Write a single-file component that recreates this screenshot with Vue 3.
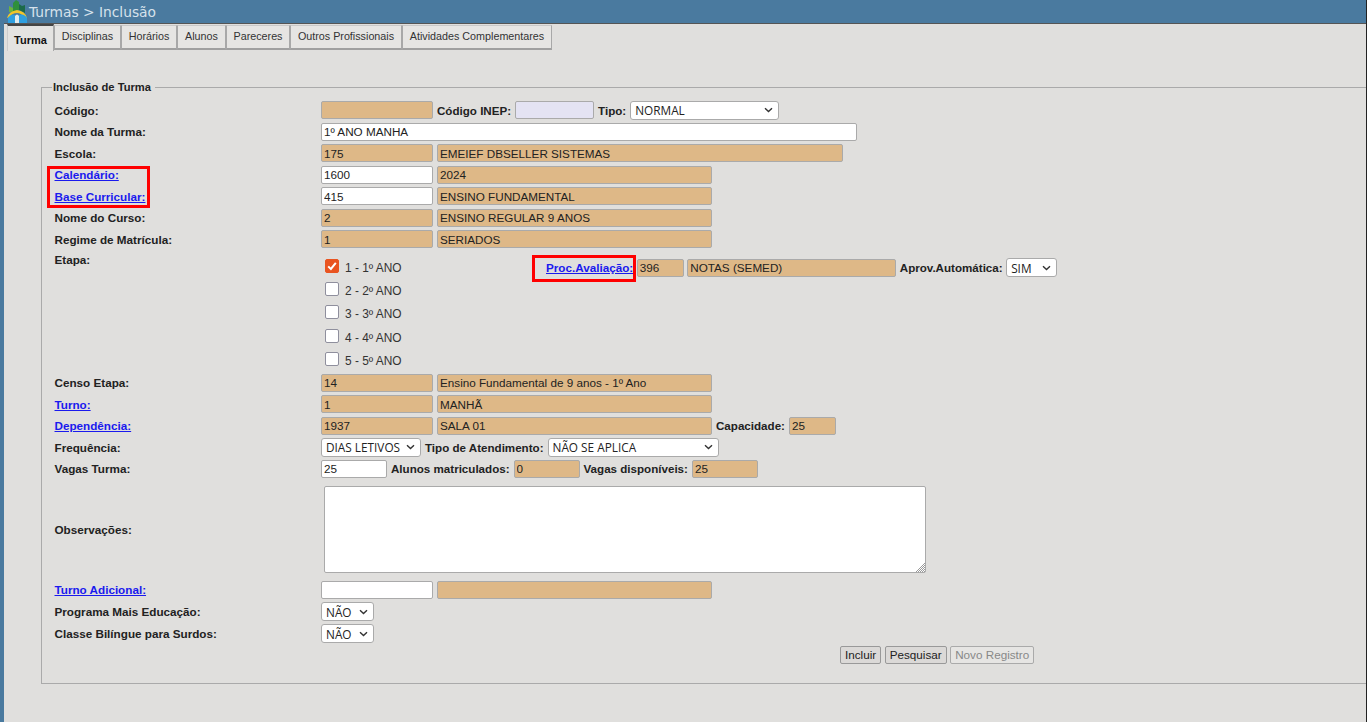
<template>
  <div class="page">
    <!-- barra de titulo -->
    <header class="title-bar">
      <svg class="logo" width="22" height="23" viewBox="0 0 22 23">
        <path d="M3 12 L3 6 L7 8 L7 12 Z" fill="#6cb33f" />
        <path d="M7 12 L7 3 L10 0 L13 2 L13 10 Z" fill="#2f8f3c" />
        <path d="M13 10 L13 4 L16 6 L19 5 L19 13 Z" fill="#1c6a4a" />
        <path d="M1 18 Q3 11 11 10 Q19 11 21 18 L18 17 Q15 13 11 13 Q6 13 4 17 Z" fill="#f2c52a" />
        <path d="M2 23 L2 18 Q5 13 9 15 L9 23 Z" fill="#2f9fe0" />
        <path d="M13 23 L13 15 Q18 13 21 18 L21 23 Z" fill="#2f9fe0" />
        <path d="M9 23 L9 16 Q11 13 13 16 L13 23 Z" fill="#dfe9ee" />
      </svg>
      <span class="title-text">Turmas &gt; Inclusão</span>
    </header>

    <nav class="tabs">
      <a
        v-for="(tab, i) in tabs"
        :key="tab.name"
        class="tab"
        :class="{ active: i === 0 }"
        :style="{ width: tab.width + 'px' }"
      >{{ tab.name }}</a>
    </nav>

    <form class="form-area" @submit.prevent>
      <fieldset class="box">
        <legend>Inclusão de Turma</legend>

        <div class="row">
          <label class="lbl">Código:</label>
          <div class="fields">
            <input class="ro w112" readonly />
            <b>Código INEP:</b>
            <input class="inep" readonly />
            <b>Tipo:</b>
            <select class="w149"><option>NORMAL</option></select>
          </div>
        </div>

        <div class="row">
          <label class="lbl">Nome da Turma:</label>
          <div class="fields"><input class="w536" value="1º ANO MANHA" /></div>
        </div>

        <div class="row">
          <label class="lbl">Escola:</label>
          <div class="fields">
            <input class="ro w112" value="175" readonly />
            <input class="ro w406" value="EMEIEF DBSELLER SISTEMAS" readonly />
          </div>
        </div>

        <div class="row">
          <a class="lbl link">Calendário:</a>
          <div class="fields">
            <input class="w112" value="1600" />
            <input class="ro w275" value="2024" readonly />
          </div>
        </div>

        <div class="row">
          <a class="lbl link">Base Curricular:</a>
          <div class="fields">
            <input class="w112" value="415" />
            <input class="ro w275" value="ENSINO FUNDAMENTAL" readonly />
          </div>
        </div>

        <div class="row">
          <label class="lbl">Nome do Curso:</label>
          <div class="fields">
            <input class="ro w112" value="2" readonly />
            <input class="ro w275" value="ENSINO REGULAR 9 ANOS" readonly />
          </div>
        </div>

        <div class="row">
          <label class="lbl">Regime de Matrícula:</label>
          <div class="fields">
            <input class="ro w112" value="1" readonly />
            <input class="ro w275" value="SERIADOS" readonly />
          </div>
        </div>

        <div class="row etapa-row">
          <label class="lbl etapa-lbl">Etapa:</label>
          <div class="etapa">
            <ul class="checks">
              <li v-for="(et, i) in etapas" :key="et">
                <span class="check" :class="{ on: i === 0 }">
                  <svg v-if="i === 0" width="10" height="10" viewBox="0 0 10 10">
                    <path d="M1.2 5.4 L3.9 8 L8.8 1.9" fill="none" stroke="#fff" stroke-width="2" />
                  </svg>
                </span>
                <span class="check-text">{{ et }}</span>
              </li>
            </ul>
            <div class="fields proc">
              <a class="link">Proc.Avaliação:</a>
              <input class="ro w47" value="396" readonly />
              <input class="ro w209" value="NOTAS (SEMED)" readonly />
              <b>Aprov.Automática:</b>
              <select class="w51"><option>SIM</option></select>
            </div>
          </div>
        </div>

        <div class="row">
          <label class="lbl">Censo Etapa:</label>
          <div class="fields">
            <input class="ro w112" value="14" readonly />
            <input class="ro w275" value="Ensino Fundamental de 9 anos - 1º Ano" readonly />
          </div>
        </div>

        <div class="row">
          <a class="lbl link">Turno:</a>
          <div class="fields">
            <input class="ro w112" value="1" readonly />
            <input class="ro w275" value="MANHÃ" readonly />
          </div>
        </div>

        <div class="row">
          <a class="lbl link">Dependência:</a>
          <div class="fields">
            <input class="ro w112" value="1937" readonly />
            <input class="ro w275" value="SALA 01" readonly />
            <b>Capacidade:</b>
            <input class="ro w47" value="25" readonly />
          </div>
        </div>

        <div class="row">
          <label class="lbl">Frequência:</label>
          <div class="fields">
            <select class="w100"><option>DIAS LETIVOS</option></select>
            <b>Tipo de Atendimento:</b>
            <select class="w171"><option>NÃO SE APLICA</option></select>
          </div>
        </div>

        <div class="row">
          <label class="lbl">Vagas Turma:</label>
          <div class="fields">
            <input class="w66" value="25" />
            <b>Alunos matriculados:</b>
            <input class="ro w66" value="0" readonly />
            <b>Vagas disponíveis:</b>
            <input class="ro w66" value="25" readonly />
          </div>
        </div>

        <div class="row obs-row">
          <label class="lbl">Observações:</label>
          <div class="fields">
            <div class="obs-wrap">
              <textarea class="obs"></textarea>
              <!-- alca de redimensionar -->
              <svg class="grip" width="11" height="11" viewBox="0 0 11 11">
                <path d="M1 10 L10 1 M3 10 L10 3 M5 10 L10 5 M7 10 L10 7 M9 10 L10 9" stroke="#9a9a9a" stroke-width="1" fill="none" />
              </svg>
            </div>
          </div>
        </div>

        <div class="row tall">
          <a class="lbl link">Turno Adicional:</a>
          <div class="fields">
            <input class="w112" />
            <input class="ro w275" readonly />
          </div>
        </div>

        <div class="row tall">
          <label class="lbl">Programa Mais Educação:</label>
          <div class="fields"><select class="w53"><option>NÃO</option></select></div>
        </div>

        <div class="row tall">
          <label class="lbl">Classe Bilíngue para Surdos:</label>
          <div class="fields"><select class="w53"><option>NÃO</option></select></div>
        </div>

        <div class="actions">
          <button>Incluir</button>
          <button>Pesquisar</button>
          <button disabled>Novo Registro</button>
        </div>
      </fieldset>
    </form>

    <!-- marcacoes vermelhas do print -->
    <div class="mark mark-a"></div>
    <div class="mark mark-b"></div>
  </div>
</template>

<script setup>
const tabs = [
  { name: 'Turma', width: 47 },
  { name: 'Disciplinas', width: 67 },
  { name: 'Horários', width: 56 },
  { name: 'Alunos', width: 49 },
  { name: 'Pareceres', width: 64 },
  { name: 'Outros Profissionais', width: 112 },
  { name: 'Atividades Complementares', width: 150 }
]

const etapas = ['1 - 1º ANO', '2 - 2º ANO', '3 - 3º ANO', '4 - 4º ANO', '5 - 5º ANO']
</script>

<style>
html, body { margin: 0; background: #e0dfdd; overflow: hidden; }
</style>

<style scoped>
.page {
  position: relative;
  height: 722px;
  box-sizing: border-box;
  background: #e0dfdd;
  border-left: 4px solid #4a7a9f;
  border-right: 1px solid #222;
  font-family: "Liberation Sans", Arial, sans-serif;
  font-size: 11.7px;
  color: #222;
  overflow: hidden;
}

/* ===== topo ===== */
.title-bar {
  display: flex;
  align-items: center;
  height: 23px;
  margin-left: -4px;
  padding-left: 6px;
  background: #4a7a9f;
  border-bottom: 1px solid #555;
}
.logo { flex: none; }
.title-text {
  margin-left: 1px;
  font-family: "DejaVu Sans", Verdana, sans-serif;
  font-size: 13.8px;
  color: #d6e2ec;
}

/* ===== abas ===== */
.tabs {
  display: flex;
  align-items: flex-end;
  height: 26px;
  padding-left: 3px;
}
.tab {
  display: flex;
  align-items: center;
  justify-content: center;
  flex: none;
  box-sizing: border-box;
  height: 25px;
  padding-bottom: 2px;
  border: 1px solid #a8a8a8;
  border-top-color: #c8c8c8;
  border-bottom: 2px solid #a0a0a0;
  background: #e6e5e3;
  color: #333;
  font-size: 10.75px;
  white-space: nowrap;
}
.tab.active {
  height: 27px;
  margin-bottom: -1px;
  padding-bottom: 0;
  padding-top: 2px;
  border-top: 2px solid #444;
  border-bottom: none;
  border-left-color: #ccc;
  background: #e4e3e1;
  color: #111;
  font-size: 11px;
  font-weight: bold;
}

/* ===== formulario ===== */
.form-area {
  padding: 30px 0 0 37px;
}
.box {
  box-sizing: border-box;
  height: 604px;
  margin: 0;
  padding: 5.5px 0 0 12px;
  border: 1px solid #aaa;
  border-right: none;
}
legend {
  padding: 0 4px 0 1px;
  margin-left: -2px;
  font-weight: bold;
  font-size: 11.2px;
  line-height: 14px;
  color: #222;
}
.row {
  display: flex;
  align-items: center;
  height: 21.5px;
}
.row.tall { height: 22px; }
.lbl {
  flex: none;
  width: 267px;
  padding-left: 0.5px;
  box-sizing: border-box;
  font-weight: bold;
  color: #222;
}
.link {
  color: #1a1aee;
  font-weight: bold;
  text-decoration: underline;
}
.fields {
  display: flex;
  align-items: center;
  gap: 4px;
}
.fields b { font-size: 11.6px; font-weight: bold; white-space: nowrap; }

input, select, textarea, button {
  box-sizing: border-box;
  margin: 0;
  font-family: "Liberation Sans", Arial, sans-serif;
  font-size: 11.7px;
  color: #222;
}
input {
  flex: none;
  height: 18px;
  padding: 0 2px;
  border: 1px solid #aaa;
  border-radius: 2px;
  background: #fff;
  outline: none;
}
input.ro { background: #deb887; }
input.inep { width: 79px; background: #e4e3f3; }
select {
  appearance: none;
  height: 19px;
  padding: 0 14px 0 4px;
  border: 1px solid #aaa;
  border-radius: 3px;
  background: #fff url("data:image/svg+xml,%3Csvg xmlns='http://www.w3.org/2000/svg' width='9' height='6' viewBox='0 0 9 6'%3E%3Cpath d='M1 1.2 L4.5 4.6 L8 1.2' fill='none' stroke='%23333' stroke-width='1.4'/%3E%3C/svg%3E") no-repeat right 5px center;
  font-family: "Open Sans", sans-serif;
  font-size: 11.8px;
  outline: none;
}

.w47 { width: 47px; }
.w51 { width: 51px; }
.w53 { width: 53px; }
.w66 { width: 66px; }
.w100 { width: 100px; }
.w112 { width: 112px; }
.w149 { width: 149px; }
.w171 { width: 171px; }
.w209 { width: 209px; }
.w275 { width: 275px; }
.w406 { width: 406px; }
.w536 { width: 536px; }

/* ===== etapa ===== */
.etapa-row {
  align-items: flex-start;
  height: 122px;
}
.etapa-lbl { padding-top: 3px; }
.etapa {
  display: flex;
  align-items: flex-start;
  padding-top: 6px;
}
.checks {
  flex: none;
  width: 225px;
  margin: 0;
  padding: 0 0 0 4px;
  box-sizing: border-box;
  list-style: none;
}
.checks li {
  display: flex;
  align-items: center;
  height: 23.4px;
  gap: 6px;
}
.check {
  display: flex;
  align-items: center;
  justify-content: center;
  flex: none;
  box-sizing: border-box;
  width: 14px;
  height: 14px;
  margin-top: -4px;
  border: 1.5px solid #8f8f9d;
  border-radius: 2px;
  background: #fff;
}
.check.on {
  border-color: #e95420;
  background: #e95420;
}
.check-text { font-size: 11.9px; color: #333; }
.proc { height: 23.4px; gap: 3.5px; }

/* ===== observacoes ===== */
.obs-row { height: 99px; }
.obs-wrap {
  position: relative;
  display: flex;
  margin-left: 3px;
}
.obs {
  width: 602px;
  height: 87px;
  border: 1px solid #aaa;
  border-radius: 2px;
  background: #fff;
  outline: none;
  resize: none;
}
.grip {
  position: absolute;
  right: 0;
  bottom: 0;
}

/* ===== botoes ===== */
.actions {
  display: flex;
  gap: 3.5px;
  padding: 1px 0 0 786px;
}
button {
  height: 18px;
  padding: 0 4px;
  border: 1px solid #999;
  border-radius: 2px;
  background: #dbd9d7;
  color: #222;
  font-size: 11.7px;
}
button:disabled {
  border-color: #aaa;
  background: #e6e5e3;
  color: #888;
}

/* ===== marcacoes ===== */
.mark {
  position: absolute;
  box-sizing: border-box;
  border: 3px solid #f00;
}
.mark-a { left: 43px; top: 166px; width: 103px; height: 42px; }
.mark-b { left: 528px; top: 255px; width: 104px; height: 27px; }
</style>
